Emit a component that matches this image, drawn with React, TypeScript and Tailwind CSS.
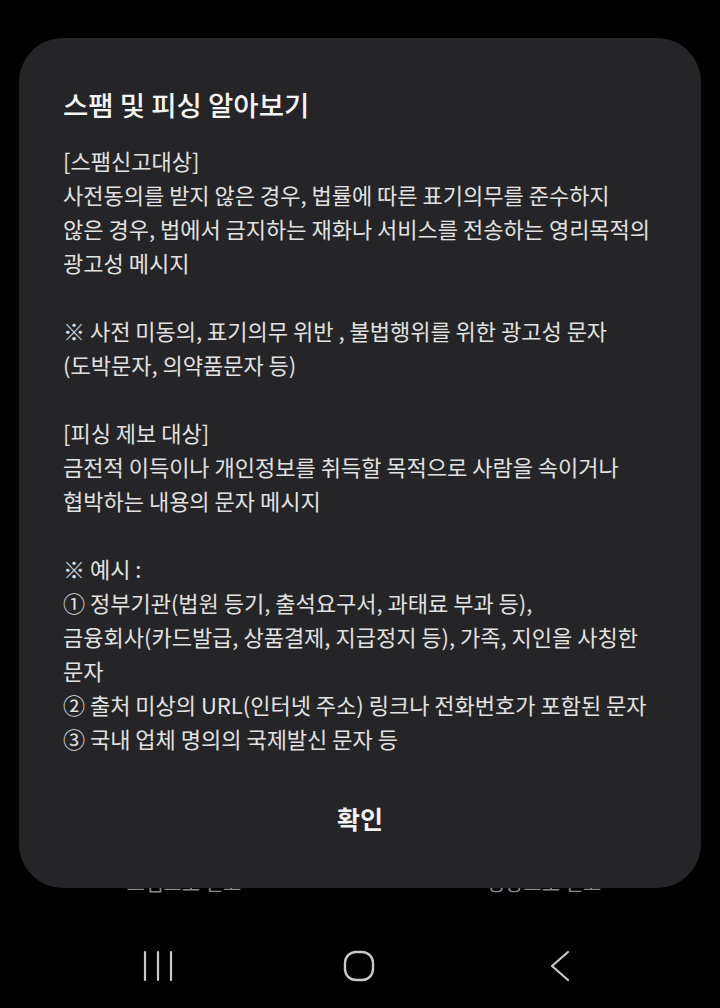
import React from 'react';

const font = { fontFamily: '"Noto Sans CJK KR", "Noto Sans", sans-serif' };

const sections: string[][] = [
    [
        '[스팸신고대상]',
        '사전동의를 받지 않은 경우, 법률에 따른 표기의무를 준수하지',
        '않은 경우, 법에서 금지하는 재화나 서비스를 전송하는 영리목적의',
        '광고성 메시지',
    ],
    ['※ 사전 미동의, 표기의무 위반 , 불법행위를 위한 광고성 문자', '(도박문자, 의약품문자 등)'],
    ['[피싱 제보 대상]', '금전적 이득이나 개인정보를 취득할 목적으로 사람을 속이거나', '협박하는 내용의 문자 메시지'],
    [
        '※ 예시 :',
        '① 정부기관(법원 등기, 출석요구서, 과태료 부과 등),',
        '금융회사(카드발급, 상품결제, 지급정지 등), 가족, 지인을 사칭한',
        '문자',
        '② 출처 미상의 URL(인터넷 주소) 링크나 전화번호가 포함된 문자',
        '③ 국내 업체 명의의 국제발신 문자 등',
    ],
];

const NavBar = () => (
    <div className="flex h-[84px] items-center pl-[57px]">
        <div className="flex w-[201px] justify-center">
            <svg width="30" height="32" viewBox="0 0 30 32" fill="none" stroke="#c9c9c9" strokeWidth="2.2" strokeLinecap="round">
                <path d="M2 2v28M15 2v28M28 2v28" />
            </svg>
        </div>
        <div className="flex w-[201px] justify-center">
            <svg width="32" height="32" viewBox="0 0 32 32" fill="none" stroke="#c9c9c9" strokeWidth="2.4">
                <rect x="2" y="2" width="28" height="28" rx="11" />
            </svg>
        </div>
        <div className="flex w-[201px] justify-center">
            <svg width="22" height="32" viewBox="0 0 22 32" fill="none" stroke="#c9c9c9" strokeWidth="2.2" strokeLinecap="round" strokeLinejoin="round">
                <path d="M19 2L3 16l16 14" />
            </svg>
        </div>
    </div>
);

const App = () => {
    return (
        <div className="relative flex h-[1008px] w-[720px] flex-col overflow-hidden bg-black" style={font}>
            <div className="flex flex-1 items-end">
                <div className="mb-[26px] flex w-full text-[20px] leading-[30px] text-[#8a8a8a]">
                    <p className="w-[368px] text-center">스팸으로 신고</p>
                    <p className="w-[352px] text-center">정상으로 신고</p>
                </div>
            </div>
            <NavBar />

            <div className="absolute left-[19px] top-[38px] w-[682px] rounded-[44px] bg-[#252527] pb-[53px] pl-[44px] pr-[20px] pt-[48px]">
                <h1 className="text-[27.5px] font-medium leading-[36px] text-[#f4f4f4]">스팸 및 피싱 알아보기</h1>
                <div className="mt-[21px] text-[22px] leading-[34px] text-[#e2e2e2]">
                    {sections.map((lines, i) => (
                        <div key={i} className={i > 0 ? 'mt-[34px]' : ''}>
                            {lines.map((line) => (
                                <p key={line} className="whitespace-nowrap">
                                    {line}
                                </p>
                            ))}
                        </div>
                    ))}
                </div>
                <div className="mt-[46px] pr-[24px] text-center text-[25px] font-bold leading-[34px] text-[#f2f2f2]">확인</div>
            </div>
        </div>
    );
};

export default App;
